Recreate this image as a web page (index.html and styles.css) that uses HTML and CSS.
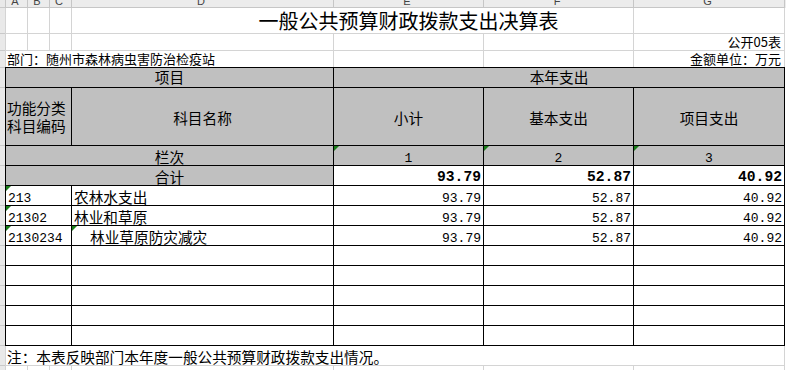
FILE: index.html
```html
<!DOCTYPE html>
<html lang="zh-CN">
<head>
<meta charset="utf-8">
<title>一般公共预算财政拨款支出决算表</title>
<link rel="stylesheet" href="styles.css">
</head>
<body>
<div class="page">
  <div class="strip">
    <div class="s s-ch"></div>
    <div class="s s-r1"></div>
    <div class="s s-r2"></div>
    <div class="s s-r3"></div>
    <div class="s s-r"></div>
    <div class="s s-h2"></div>
    <div class="s s-r"></div>
    <div class="s s-r"></div>
    <div class="s s-r"></div>
    <div class="s s-r"></div>
    <div class="s s-r"></div>
    <div class="s s-r"></div>
    <div class="s s-r"></div>
    <div class="s s-r"></div>
    <div class="s s-r"></div>
    <div class="s s-r"></div>
    <div class="s s-r"></div>
    <div class="s s-last"></div>
  </div>
  <div class="main">
    <div class="grid7 colhead">
      <div class="ch"><span>A</span></div>
      <div class="ch"><span>B</span></div>
      <div class="ch"><span>C</span></div>
      <div class="ch"><span>D</span></div>
      <div class="ch"><span>E</span></div>
      <div class="ch"><span>F</span></div>
      <div class="ch"><span>G</span></div>
    </div>
    <div class="grid7 row1">
      <div class="gc"></div>
      <div class="gc"></div>
      <div class="gc"></div>
      <div class="gc title">一般公共预算财政拨款支出决算表</div>
      <div class="gc"></div>
    </div>
    <div class="grid7 row2">
      <div class="gc"></div>
      <div class="gc"></div>
      <div class="gc"></div>
      <div class="gc"></div>
      <div class="gc"></div>
      <div class="gc"></div>
      <div class="gc right small">公开05表</div>
    </div>
    <div class="grid7 row3">
      <div class="gc dept small">部门：随州市森林病虫害防治检疫站</div>
      <div class="gc"></div>
      <div class="gc"></div>
      <div class="gc right small">金额单位：万元</div>
    </div>

    <div class="tbl">
      <div class="c hd span-ad top">项目</div>
      <div class="c hd span-eg top">本年支出</div>

      <div class="c hd code-h">功能分类<br>科目编码</div>
      <div class="c hd mid">科目名称</div>
      <div class="c hd mid">小计</div>
      <div class="c hd mid">基本支出</div>
      <div class="c hd mid">项目支出</div>

      <div class="c hd span-ad">栏次</div>
      <div class="c hd ctr mono tri">1</div>
      <div class="c hd ctr mono tri">2</div>
      <div class="c hd ctr mono tri">3</div>

      <div class="c hd span-ad">合计</div>
      <div class="c num bold">93.79</div>
      <div class="c num bold">52.87</div>
      <div class="c num bold">40.92</div>

      <div class="c code mono tri">213</div>
      <div class="c name">农林水支出</div>
      <div class="c num">93.79</div>
      <div class="c num">52.87</div>
      <div class="c num">40.92</div>

      <div class="c code mono tri">21302</div>
      <div class="c name">林业和草原</div>
      <div class="c num">93.79</div>
      <div class="c num">52.87</div>
      <div class="c num">40.92</div>

      <div class="c code mono tri">2130234</div>
      <div class="c name indent tri">林业草原防灾减灾</div>
      <div class="c num">93.79</div>
      <div class="c num">52.87</div>
      <div class="c num">40.92</div>

      <div class="c"></div><div class="c"></div><div class="c"></div><div class="c"></div><div class="c"></div>
      <div class="c"></div><div class="c"></div><div class="c"></div><div class="c"></div><div class="c"></div>
      <div class="c"></div><div class="c"></div><div class="c"></div><div class="c"></div><div class="c"></div>
      <div class="c"></div><div class="c"></div><div class="c"></div><div class="c"></div><div class="c"></div>
      <div class="c"></div><div class="c"></div><div class="c"></div><div class="c"></div><div class="c"></div>
    </div>

    <div class="note">注：本表反映部门本年度一般公共预算财政拨款支出情况。</div>

    <div class="grid7 rowlast">
      <div class="gc"></div>
      <div class="gc"></div>
      <div class="gc"></div>
      <div class="gc"></div>
      <div class="gc"></div>
      <div class="gc"></div>
      <div class="gc"></div>
    </div>
  </div>
</div>
</body>
</html>
```

FILE: styles.css
```css
* { box-sizing: border-box; }
html, body { margin: 0; padding: 0; background: #fff; }
body {
  font-family: "Noto Sans CJK SC", sans-serif;
  color: #000;
  width: 786px;
  height: 370px;
  overflow: hidden;
}
.page { display: flex; }

/* left row-header strip */
.strip { width: 5px; display: flex; flex-direction: column; background: #e9e9e9; }
.s { border-bottom: 1px solid #c9c9c9; flex: none; }
.s-ch { height: 8px; }
.s-r1 { height: 26px; }
.s-r2 { height: 17px; }
.s-r3 { height: 17px; }
.s-r { height: 20px; }
.s-h2 { height: 58px; }
.s-last { height: 20px; }

.main { width: 781px; }

.grid7 {
  display: grid;
  grid-template-columns: 22px 22px 22px 262px 150px 150px 151px;
  border-left: 1px solid #d4d4d4;
}
.gc { border-right: 1px solid #d4d4d4; border-bottom: 1px solid #d4d4d4; }

/* column letters header */
.colhead { height: 8px; background: #ececec; border-left-color: #c6c6c6; }
.ch {
  height: 8px;
  overflow: hidden;
  border-right: 1px solid #c6c6c6;
  border-bottom: 1px solid #c6c6c6;
  text-align: center;
  font-family: "Liberation Sans", sans-serif;
  font-size: 11px;
  line-height: 3px;
  color: #444;
}
.ch span { display: block; margin-left: -3px; }

.row1 .gc { height: 26px; }
.row1 .title {
  grid-column: 4 / 7;
  font-size: 20px;
  line-height: 25px;
  padding-left: 112px;
  text-align: center;
  white-space: nowrap;
}
.row2 .gc { height: 17px; }
.row3 .gc { height: 16px; border-bottom: none; }
.small { font-size: 13px; line-height: 16px; white-space: nowrap; }
.right { text-align: right; padding-right: 3px; }
.dept { grid-column: 1 / 5; padding-left: 1px; }

/* main bordered table */
.tbl {
  display: grid;
  grid-template-columns: 66px 262px 150px 150px 151px;
  grid-template-rows: 20px 58px repeat(10, 20px);
  border-top: 1px solid #000;
  border-left: 1px solid #000;
  width: 780px;
}
.c {
  position: relative;
  border-right: 1px solid #000;
  border-bottom: 1px solid #000;
  font-size: 14.67px;
  line-height: 17px;
  padding-top: 2px;
  white-space: nowrap;
}
.hd { background: #c0c0c0; text-align: center; }
.top { padding-top: 0; }
.span-ad { grid-column: 1 / 3; }
.span-eg { grid-column: 3 / 6; }
.mid { display: flex; align-items: center; justify-content: center; padding-top: 2px; }
.code-h {
  text-align: left;
  padding-left: 1px;
  display: flex;
  align-items: center;
  line-height: 18px;
  padding-top: 1px;
}
.mono { font-family: "Liberation Mono", monospace; font-size: 13px; padding-top: 4px; }
.ctr { text-align: center; }
.code { padding-left: 2px; }
.name { padding-left: 2px; }
.indent { padding-left: 18px; }
.num {
  font-family: "Liberation Mono", monospace;
  font-size: 13px;
  text-align: right;
  padding-right: 2px;
  padding-top: 4px;
}
.bold { font-weight: bold; font-size: 14.67px; padding-top: 3px; }

/* excel error indicator */
.tri::before {
  content: "";
  position: absolute;
  left: 0;
  top: 0;
  border-top: 5px solid #1a7f1a;
  border-right: 5px solid transparent;
}

.note {
  height: 20px;
  border-left: 1px solid #d4d4d4;
  border-right: 1px solid #d4d4d4;
  border-bottom: 1px solid #d4d4d4;
  width: 780px;
  font-size: 14.67px;
  line-height: 17px;
  padding-top: 2px;
  padding-left: 1px;
  white-space: nowrap;
}
.rowlast .gc { height: 20px; }
```
